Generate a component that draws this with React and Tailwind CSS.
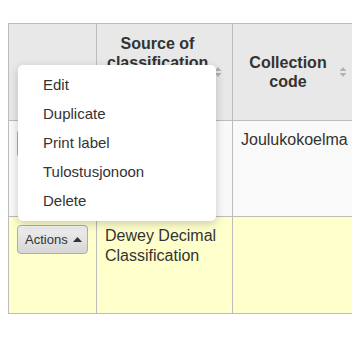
import React from "react";

function SortIcon() {
  return (
    <svg
      className="absolute right-[10px] top-1/2 -translate-y-1/2"
      width="8"
      height="11"
      viewBox="0 0 8 11"
    >
      <path d="M4 0.5 L7.5 4.5 L0.5 4.5 Z" fill="#b3b3b3" />
      <path d="M4 10.5 L7.5 6.5 L0.5 6.5 Z" fill="#b3b3b3" />
    </svg>
  );
}

function ActionsButton() {
  return (
    <button className="flex items-center gap-[5px] h-[29px] w-[71px] pl-[7px] rounded-[4px] border border-[#adadad] bg-gradient-to-b from-[#efefef] to-[#d6d6d6] text-[13px] text-[#333] shadow-[inset_0_1px_0_rgba(255,255,255,0.6)]">
      Actions
      <svg width="9" height="5" viewBox="0 0 9 5">
        <path d="M0 5 L4.5 0 L9 5 Z" fill="#333" />
      </svg>
    </button>
  );
}

export default function App() {
  const items = ["Edit", "Duplicate", "Print label", "Tulostusjonoon", "Delete"];
  return (
    <div
      className="relative w-[352px] h-[349px] overflow-hidden bg-white text-[#333]"
      style={{ fontFamily: '"Liberation Sans", Arial, sans-serif' }}
    >
      <div className="pt-[23px] pl-[8px]">
        <table className="border-collapse table-fixed w-[349px]">
          <colgroup>
            <col className="w-[88px]" />
            <col className="w-[136px]" />
            <col className="w-[125px]" />
          </colgroup>
          <thead>
            <tr className="h-[97px] bg-[#e8e8e8]">
              <th className="relative border border-[#bcbcbc]"></th>
              <th className="relative border border-[#bcbcbc] pl-[10px] pr-[24px] text-center align-middle text-[16px] leading-[19px] font-bold">
                Source of classification or shelving scheme
                <SortIcon />
              </th>
              <th className="relative border border-[#bcbcbc] pl-[10px] pr-[24px] text-center align-middle text-[16px] leading-[19px] font-bold">
                Collection code
                <SortIcon />
              </th>
            </tr>
          </thead>
          <tbody className="text-[16px] leading-[20px]">
            <tr className="h-[96px] bg-[#f9f9f9]">
              <td className="border border-[#bcbcbc] align-top pt-[8px] pl-[8px]">
                <ActionsButton />
              </td>
              <td className="border border-[#bcbcbc] align-top pt-[9px] pl-[8px]">
                Dewey Decimal Classification
              </td>
              <td className="border border-[#bcbcbc] align-top pt-[9px] pl-[8px]">
                Joulukokoelma
              </td>
            </tr>
            <tr className="h-[97px] bg-[#ffffcc]">
              <td className="border border-[#bcbcbc] align-top pt-[8px] pl-[8px]">
                <ActionsButton />
              </td>
              <td className="border border-[#bcbcbc] align-top pt-[9px] pl-[8px]">
                Dewey Decimal Classification
              </td>
              <td className="border border-[#bcbcbc] align-top pt-[9px] pl-[8px]"></td>
            </tr>
          </tbody>
        </table>
      </div>

      <ul className="absolute left-[18px] top-[65px] w-[198px] pt-[6px] pb-[5px] rounded-[5px] bg-white shadow-[0_3px_10px_rgba(0,0,0,0.2)]">
        {items.map((t) => (
          <li key={t} className="h-[29px] flex items-center pl-[25px] text-[15px] text-[#333]">
            {t}
          </li>
        ))}
      </ul>
    </div>
  );
}
